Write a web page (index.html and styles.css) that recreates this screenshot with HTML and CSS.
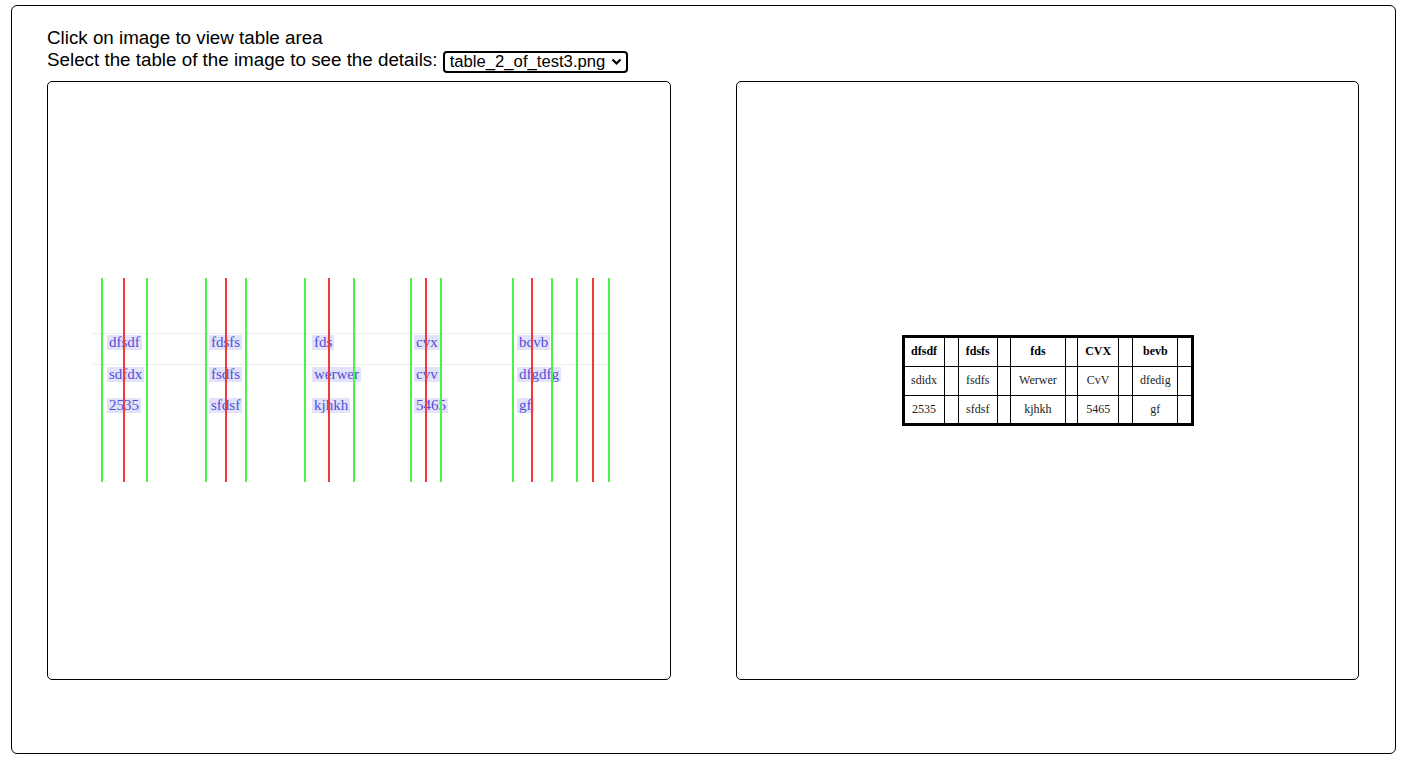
FILE: index.html
```html
<!DOCTYPE html>
<html>
<head>
<meta charset="utf-8">
<link rel="stylesheet" href="styles.css">
</head>
<body>
<div class="frame">
  <div class="intro">
    <div class="line">Click on image to view table area</div>
    <div class="line">Select the table of the image to see the details:
      <span class="select-wrap">
        <select class="picker"><option>table_2_of_test3.png</option></select>
        <svg class="chev" width="11" height="8" viewBox="0 0 11 8"><polyline points="1.5,1.5 5.5,5.5 9.5,1.5" fill="none" stroke="#000" stroke-width="2.2"/></svg>
      </span>
    </div>
  </div>
  <div class="panels">
    <div class="panel">
      <div class="canvas">
        <div class="hline" style="top:251px"></div>
        <div class="hline" style="top:282px"></div>

        <span class="lbl" style="left:59px;top:253px">dfsdf</span>
        <span class="lbl" style="left:59px;top:285px">sdfdx</span>
        <span class="lbl" style="left:59px;top:316px">2535</span>
        <span class="lbl" style="left:161px;top:253px">fdsfs</span>
        <span class="lbl" style="left:161px;top:285px">fsdfs</span>
        <span class="lbl" style="left:161px;top:316px">sfdsf</span>
        <span class="lbl" style="left:264px;top:253px">fds</span>
        <span class="lbl" style="left:264px;top:285px">werwer</span>
        <span class="lbl" style="left:264px;top:316px">kjhkh</span>
        <span class="lbl" style="left:366px;top:253px">cvx</span>
        <span class="lbl" style="left:366px;top:285px">cvv</span>
        <span class="lbl" style="left:366px;top:316px">5465</span>
        <span class="lbl" style="left:469px;top:253px">bcvb</span>
        <span class="lbl" style="left:469px;top:285px">dfgdfg</span>
        <span class="lbl" style="left:469px;top:316px">gf</span>

        <div class="vline green" style="left:53px"></div>
        <div class="vline red" style="left:75px"></div>
        <div class="vline green" style="left:98px"></div>
        <div class="vline green" style="left:157px"></div>
        <div class="vline red" style="left:177px"></div>
        <div class="vline green" style="left:197px"></div>
        <div class="vline green" style="left:256px"></div>
        <div class="vline red" style="left:280px"></div>
        <div class="vline green" style="left:305px"></div>
        <div class="vline green" style="left:362px"></div>
        <div class="vline red" style="left:377px"></div>
        <div class="vline green" style="left:392px"></div>
        <div class="vline green" style="left:464px"></div>
        <div class="vline red" style="left:483px"></div>
        <div class="vline green" style="left:503px"></div>
        <div class="vline green" style="left:528px"></div>
        <div class="vline red" style="left:544px"></div>
        <div class="vline green" style="left:560px"></div>
      </div>
    </div>
    <div class="panel center">
      <table class="tbl">
        <colgroup>
          <col style="width:41px"><col style="width:14px">
          <col style="width:39px"><col style="width:13px">
          <col style="width:55px"><col style="width:12px">
          <col style="width:41px"><col style="width:14px">
          <col style="width:45px"><col style="width:14px">
        </colgroup>
        <tr class="head"><td>dfsdf</td><td></td><td>fdsfs</td><td></td><td>fds</td><td></td><td>CVX</td><td></td><td>bevb</td><td></td></tr>
        <tr class="mid"><td>sdidx</td><td></td><td>fsdfs</td><td></td><td>Werwer</td><td></td><td>CvV</td><td></td><td>dfedig</td><td></td></tr>
        <tr class="last"><td>2535</td><td></td><td>sfdsf</td><td></td><td>kjhkh</td><td></td><td>5465</td><td></td><td>gf</td><td></td></tr>
      </table>
    </div>
  </div>
</div>
</body>
</html>
```

FILE: styles.css
```css
html, body {
  margin: 0;
  padding: 0;
  background: #fff;
}
body {
  font-family: "Liberation Sans", Arial, sans-serif;
  color: #000;
}
.frame {
  box-sizing: border-box;
  margin: 5px 16px 0 11px;
  height: 749px;
  border: 1px solid #000;
  border-radius: 6px;
  padding: 21px 36px 0 35px;
}
.intro {
  font-size: 18.8px;
  line-height: 21.5px;
}
.line {
  white-space: nowrap;
}
.select-wrap {
  position: relative;
  display: inline-block;
  vertical-align: -1px;
}
.picker {
  appearance: none;
  -webkit-appearance: none;
  font-family: "Liberation Sans", Arial, sans-serif;
  font-size: 16.67px;
  color: #000;
  background: #fff;
  border: 2px solid #000;
  border-radius: 4px;
  height: 22px;
  width: 185px;
  padding: 0 0 0 5px;
  margin: 0;
  line-height: 18px;
}
.chev {
  position: absolute;
  right: 6px;
  top: 8px;
  pointer-events: none;
}
.panels {
  display: flex;
  gap: 65px;
  margin-top: 8px;
}
.panel {
  box-sizing: border-box;
  width: 624px;
  height: 599px;
  border: 1px solid #000;
  border-radius: 5px;
}
.panel.center {
  display: flex;
  align-items: center;
  justify-content: center;
}
.canvas {
  position: relative;
  width: 622px;
  height: 597px;
  overflow: hidden;
}
.hline {
  position: absolute;
  left: 44px;
  width: 520px;
  height: 1px;
  background: #ededed;
}
.vline {
  position: absolute;
  top: 196px;
  height: 204px;
  width: 2px;
}
.vline.green { background: #4ef04a; }
.vline.red { background: #f03a3a; }
.lbl {
  position: absolute;
  font-family: "Liberation Serif", "Times New Roman", serif;
  font-size: 15px;
  line-height: 15px;
  height: 15px;
  padding: 0 2px;
  background: #e2e2fa;
  color: #4f4fd8;
  white-space: nowrap;
}
.tbl {
  border-collapse: collapse;
  table-layout: fixed;
  width: 292px;
  border: 3px solid #000;
  font-family: "Liberation Serif", "Times New Roman", serif;
  font-size: 12px;
  color: #222;
}
.tbl td {
  border: 1px solid #000;
  padding: 0;
  text-align: center;
  overflow: hidden;
  white-space: nowrap;
}
.tbl tr.head td {
  height: 28px;
  font-weight: bold;
  color: #000;
}
.tbl tr.mid td { height: 28px; }
.tbl tr.last td { height: 27px; }
```
